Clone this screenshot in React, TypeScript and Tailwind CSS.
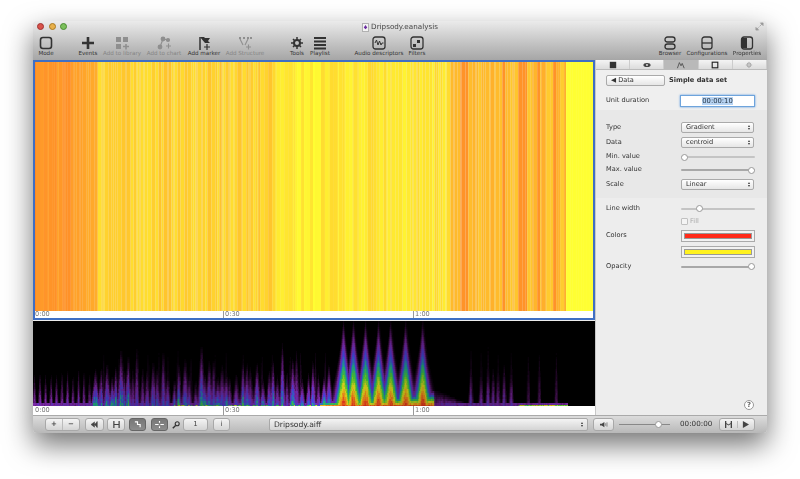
import { FC, ReactNode } from 'react';

// seeded noise so stripes and spectrogram cells stay the same between runs
const makeRng = (seed: number) => () => {
  seed = (seed * 1664525 + 1013904223) % 4294967296;
  return seed / 4294967296;
};

const heatBase = (x: number) => {
  if (x < 16) return 0.86;
  if (x < 49) return 0.82;
  if (x < 61) return 0.62;
  if (x < 239) return 0.36;
  if (x < 286) return 0.12;
  if (x < 414) return 0.2;
  if (x < 532) return 0.52;
  return 0;
};

const buildStripes = () => {
  const rng = makeRng(17);
  const out: { x: number; w: number; fill: string }[] = [];
  let x = 0;
  while (x < 560) {
    const w = 1 + Math.floor(rng() * 4);
    let v = heatBase(x) + (rng() - 0.5) * (x < 532 ? 0.24 : 0);
    const abs = x + 34;
    if ((abs > 460 && abs < 468) || (abs > 500 && abs < 505) || (abs > 516 && abs < 527) || (abs > 534 && abs < 539) || (abs > 551 && abs < 556)) v = 0.85;
    v = Math.max(0, Math.min(1, v));
    out.push({ x, w, fill: `rgb(255,${Math.round(255 - 127 * v)},${Math.round(51 - 13 * v)})` });
    x += w;
  }
  return out;
};

type Spike = { x: number; h: number; w: number; amp: number };

const buildSpikes = () => {
  const rng = makeRng(91);
  const out: Spike[] = [];
  for (let x = 1; x < 62; x += 5.5) out.push({ x, h: 38 + rng() * 6, w: 1, amp: 0.3 });
  for (let x = 62; x < 300; x += 3 + rng() * 4) {
    const tall = rng() > 0.85;
    out.push({ x, h: 30 + rng() * 26 + (tall ? 16 : 0), w: 1.5 + rng() * 2, amp: 0.36 + rng() * 0.28 });
  }
  for (let x = 70; x < 300; x += 9 + rng() * 10) out.push({ x, h: 78, w: 1, amp: 0.14 });
  [309, 319, 331, 344, 356, 371, 388].forEach((x) => out.push({ x, h: 92, w: 8, amp: 1 }));
  [436, 446, 453, 458, 463, 469, 476].forEach((x) => out.push({ x, h: 44 + rng() * 6, w: 1.2, amp: 0.34 }));
  [436, 446, 453, 463, 476].forEach((x) => out.push({ x, h: 82, w: 1, amp: 0.13 }));
  [493, 504, 521].forEach((x) => out.push({ x, h: 70, w: 0.9, amp: 0.18 }));
  return out;
};

const colorStops: [number, number[]][] = [
  [0.02, [0, 0, 0]],
  [0.1, [52, 12, 60]],
  [0.22, [125, 40, 165]],
  [0.36, [70, 70, 225]],
  [0.48, [30, 170, 150]],
  [0.6, [80, 210, 50]],
  [0.74, [240, 230, 30]],
  [0.88, [255, 130, 30]],
  [1, [240, 50, 30]],
];

const colorFor = (i: number) => {
  for (let n = 1; n < colorStops.length; n++) {
    const [hi, hc] = colorStops[n];
    const [lo, lc] = colorStops[n - 1];
    if (i <= hi) {
      const t = Math.max(0, (i - lo) / (hi - lo));
      return `rgb(${lc.map((c, k) => Math.round(c + (hc[k] - c) * t)).join(',')})`;
    }
  }
  return 'rgb(240,50,30)';
};

const buildCells = () => {
  const rng = makeRng(43);
  const spikes = buildSpikes();
  const cells: { x: number; y: number; fill: string }[] = [];
  for (let x = 0; x < 533; x++) {
    const loud = x > 285 && x < 400;
    const colNoise = loud ? 0.95 + rng() * 0.1 : 0.8 + rng() * 0.35;
    for (let y = 0; y < 85; y += 2) {
      const up = 85 - y;
      let i = 0;
      for (const s of spikes) {
        const t = up / s.h;
        if (t >= 1) continue;
        const w = s.w * Math.pow(1 - t, 1.6) + 0.8;
        const dx = (x - s.x) / w;
        if (Math.abs(dx) > 3) continue;
        i = Math.max(i, s.amp * Math.pow(1 - t, 1.25) * Math.exp(-dx * dx));
      }
      // warm ridge under the loud section, tailing off to the right
      if (loud) {
        const ridgeH = 5 + ((x - 285) / 115) * 13;
        i = Math.max(i, 1 - up / ridgeH);
      }
      if (x >= 400 && x < 430) i = Math.max(i, 0.26 * (1 - up / (20 - (x - 400) * 0.5)));
      // thin purple floor across the whole clip
      if (up <= 3) i = Math.max(i, 0.24);
      if (up <= 1 && x > 140 && x < 290 && rng() > 0.6) i = 0.62;
      if (up <= 1 && x > 483) i = 0.72;
      i *= colNoise * (loud ? 0.95 + rng() * 0.1 : 0.82 + rng() * 0.3);
      if (i > 0.03) cells.push({ x, y, fill: colorFor(Math.min(1, i)) });
    }
  }
  return cells;
};

const stripes = buildStripes();
const cells = buildCells();

const Heatmap: FC = () => (
  <svg viewBox="0 0 560 249" preserveAspectRatio="none" className="block h-[249px] w-full">
    {stripes.map((s) => (
      <rect key={s.x} x={s.x} y="0" width={s.w} height="249" fill={s.fill} />
    ))}
  </svg>
);

const Spectrogram: FC = () => (
  <svg viewBox="0 0 560 85" preserveAspectRatio="none" className="block h-[85px] w-full bg-black">
    {cells.map((c) => (
      <rect key={`${c.x}-${c.y}`} x={c.x} y={c.y} width="1" height="2" fill={c.fill} />
    ))}
  </svg>
);

const Axis: FC<{ className: string }> = ({ className }) => (
  <div className={`flex bg-white text-[6.6px] text-[#777] overflow-hidden ${className}`}>
    <span className="w-[188px]">0:00</span>
    <span className="w-[190px] border-l border-[#999] pl-[1px]">0:30</span>
    <span className="border-l border-[#999] pl-[1px]">1:00</span>
  </div>
);

const ToolItem: FC<{ label: string; className: string; off?: boolean; children: ReactNode }> = ({ label, className, off, children }) => (
  <div className={`flex flex-col items-center shrink-0 ${className}`}>
    <svg viewBox="0 0 16 14" className={`h-[14px] w-[16px] ${off ? 'text-[#8f8f8f]' : 'text-[#333]'}`} fill="none" stroke="currentColor" strokeWidth="1.6">
      {children}
    </svg>
    <span className={`whitespace-nowrap text-[5.6px] leading-[7px] ${off ? 'text-[#858585]' : 'text-[#333]'}`}>{label}</span>
  </div>
);

const Toolbar: FC = () => (
  <div className="flex h-[24px] items-start pt-[2px]">
    <ToolItem label="Mode" className="w-[26px]">
      <rect x="2.5" y="1.5" width="11" height="11" rx="2.5" />
    </ToolItem>
    <ToolItem label="Events" className="ml-[17px] w-[24px]">
      <path d="M8 1v12M2 7h12" strokeWidth="2.6" />
    </ToolItem>
    <ToolItem label="Add to library" className="ml-[2px] w-[40px]" off>
      <path d="M2 1h5v5H2zM9 1h5v5H9zM2 8h5v5H2z" fill="currentColor" stroke="none" />
      <path d="M9 10.5h6M12 8v5.5" />
    </ToolItem>
    <ToolItem label="Add to chart" className="ml-[4px] w-[36px]" off>
      <circle cx="4" cy="11" r="1.6" fill="currentColor" />
      <circle cx="7" cy="3" r="1.6" fill="currentColor" />
      <circle cx="12" cy="4" r="1.3" fill="currentColor" />
      <path d="M4 11L7 3l5 1M10 10h5M12.5 7.5v5" strokeWidth="1.1" />
    </ToolItem>
    <ToolItem label="Add marker" className="ml-[4px] w-[36px]">
      <path d="M4 14V1" strokeWidth="1.5" />
      <path d="M4 1h4l1 1h5l-2 3 2 2H9" fill="currentColor" stroke="none" />
      <path d="M8 11h6M11 8v6" strokeWidth="1.2" />
    </ToolItem>
    <ToolItem label="Add Structure" className="ml-[2px] w-[42px]" off>
      <path d="M2 1h2v2H2zM6 1h2v2H6zM10 1h2v2h-2zM13 1h2v2h-2z" fill="currentColor" stroke="none" />
      <path d="M3 3l3 6M11 3L8 9M9 11h5M11.5 8.5v5" strokeWidth="1.1" />
    </ToolItem>
    <ToolItem label="Tools" className="ml-[21px] w-[20px]">
      <circle cx="8" cy="7" r="3" fill="none" strokeWidth="2" />
      <path d="M8 1v3M8 10v3M2 7h3M11 7h3M4 3l2 2M10 9l2 2M12 3l-2 2M6 9l-2 2" strokeWidth="1.5" />
    </ToolItem>
    <ToolItem label="Playlist" className="ml-[2px] w-[22px]">
      <path d="M2 2h12M2 5.5h12M2 9h12M2 12.5h12" strokeWidth="2" />
    </ToolItem>
    <ToolItem label="Audio descriptors" className="ml-[22px] w-[52px]">
      <rect x="2" y="1" width="12" height="12" rx="2.5" strokeWidth="1.3" />
      <path d="M4 7l1.5-3L7 9l1.5-4L10 9l1-2h1.5" strokeWidth="1" />
    </ToolItem>
    <ToolItem label="Filters" className="ml-[2px] w-[20px]">
      <rect x="2" y="1" width="12" height="12" rx="2.5" strokeWidth="1.3" />
      <path d="M8 4h3v3H8zM4 8h3v3H4z" fill="currentColor" stroke="none" />
    </ToolItem>
    <div className="flex-1" />
    <ToolItem label="Browser" className="w-[24px]">
      <rect x="3" y="1" width="10" height="5" rx="2.5" strokeWidth="1.3" />
      <rect x="3" y="8" width="10" height="5" rx="2.5" strokeWidth="1.3" />
    </ToolItem>
    <ToolItem label="Configurations" className="ml-[3px] w-[44px]">
      <rect x="3" y="1" width="10" height="12" rx="2.5" strokeWidth="1.3" />
      <path d="M3 7h10" strokeWidth="1.3" />
    </ToolItem>
    <ToolItem label="Properties" className="ml-[4px] mr-[6px] w-[28px]">
      <rect x="2.5" y="1" width="11" height="12" rx="2.5" strokeWidth="1.3" />
      <path d="M3 2h5v10H3z" fill="currentColor" stroke="none" />
    </ToolItem>
  </div>
);

const tabs: { key: string; icon: ReactNode }[] = [
  { key: 'a', icon: <rect x="2" y="1" width="8" height="8" fill="#333" /> },
  { key: 'b', icon: <><ellipse cx="6" cy="5" rx="4.5" ry="2.5" fill="#444" /><circle cx="6" cy="5" r="1.2" fill="#ddd" /></> },
  { key: 'c', icon: <path d="M1.5 9L4 2l2 4 1.5-3L10 9" fill="none" stroke="#444" strokeWidth="1" /> },
  { key: 'd', icon: <rect x="2.5" y="1.5" width="7" height="7" fill="none" stroke="#222" strokeWidth="1.4" /> },
  { key: 'e', icon: <><circle cx="6" cy="5" r="2.4" fill="none" stroke="#aaa" strokeWidth="1.3" /><path d="M6 1v8M2 5h8" stroke="#aaa" strokeWidth="0.8" /></> },
];

const Row: FC<{ label: string; className?: string; children?: ReactNode }> = ({ label, className = '', children }) => (
  <div className={`flex items-center pl-[10px] ${className}`}>
    <span className="w-[75px] shrink-0 text-[6.6px] text-[#333]">{label}</span>
    {children}
  </div>
);

const Select: FC<{ value: string }> = ({ value }) => (
  <div className="flex h-[11px] w-[73px] items-center justify-between rounded-[2px] border border-[#aaa] bg-gradient-to-b from-white to-[#e6e6e6] pl-[4px] pr-[3px] text-[6.6px] text-[#333]">
    <span>{value}</span>
    <span className="flex flex-col gap-[1px]">
      <span className="block h-0 w-0 border-x-[1.5px] border-b-[2px] border-x-transparent border-b-[#333]" />
      <span className="block h-0 w-0 border-x-[1.5px] border-t-[2px] border-x-transparent border-t-[#333]" />
    </span>
  </div>
);

const Slider: FC<{ percent: number; dark?: boolean }> = ({ percent, dark }) => (
  <div className="relative h-[7px] w-[74px]">
    <div className={`absolute left-0 right-0 top-[2.5px] h-[2px] rounded-full ${dark ? 'bg-[#a8a8a8]' : 'bg-[#c4c4c4]'}`} />
    <div className="absolute top-0 h-[7px] w-[7px] rounded-full border border-[#999] bg-white" style={{ left: `calc(${percent}% - ${(percent / 100) * 7}px)` }} />
  </div>
);

const Swatch: FC<{ color: string }> = ({ color }) => (
  <div className="h-[12px] w-[74px] border border-[#aaa] bg-[#f2f2f2] p-[2px]">
    <div className={`h-full w-full border border-[#999] ${color}`} />
  </div>
);

const Panel: FC = () => (
  <div className="flex w-[172px] shrink-0 flex-col border-l border-[#c8c8c8] bg-[#ededed]">
    <div className="flex h-[10px] border-b border-[#bbb] bg-gradient-to-b from-[#f4f4f4] to-[#dcdcdc]">
      {tabs.map((t, i) => (
        <div key={t.key} className={`flex flex-1 items-center justify-center border-r border-[#ccc] ${i === 2 ? 'bg-[#b9b9b9]' : ''}`}>
          <svg viewBox="0 0 12 10" className="h-[8px] w-[10px]">{t.icon}</svg>
        </div>
      ))}
    </div>
    <div className="h-[40px] bg-[#efefef]">
      <div className="flex items-center pl-[10px] pt-[5px]">
        <div className="flex h-[11px] w-[59px] items-center rounded-[2px] border border-[#aaa] bg-gradient-to-b from-white to-[#e6e6e6] pl-[4px] text-[6.6px] text-[#333]">◀ Data</div>
        <span className="ml-[4px] text-[6.6px] font-bold text-[#333]">Simple data set</span>
      </div>
      <Row label="Unit duration" className="mt-[9px]">
        <div className="-ml-[1px] h-[12px] w-[75px] border border-[#6ea4dc] bg-white text-center text-[6.8px] leading-[10px] text-[#234] shadow-[0_0_2px_#5b9ae0]">
          <span className="bg-[#b7d3f2]">00:00:10</span>
        </div>
      </Row>
    </div>
    <div className="h-[88px] bg-[#e8e8e8] pt-[12px]">
      <Row label="Type"><Select value="Gradient" /></Row>
      <Row label="Data" className="mt-[4px]"><Select value="centroid" /></Row>
      <Row label="Min. value" className="mt-[4px] h-[10px]"><Slider percent={0} /></Row>
      <Row label="Max. value" className="mt-[3px] h-[10px]"><Slider percent={100} dark /></Row>
      <Row label="Scale" className="mt-[4px]"><Select value="Linear" /></Row>
    </div>
    <div className="relative flex-1 pt-[6px]">
      <Row label="Line width" className="h-[9px]"><Slider percent={23} /></Row>
      <Row label="" className="mt-[4px] h-[9px]">
        <span className="h-[7px] w-[7px] rounded-[1px] border border-[#c0c0c0] bg-[#f4f4f4]" />
        <span className="ml-[2px] text-[6.6px] text-[#aaa]">Fill</span>
      </Row>
      <Row label="Colors" className="mt-[4px]"><Swatch color="bg-[#ff2a1a]" /></Row>
      <Row label="" className="mt-[4px]"><Swatch color="bg-[#fff21f]" /></Row>
      <Row label="Opacity" className="mt-[4px] h-[9px]"><Slider percent={100} dark /></Row>
      <div className="absolute bottom-[5px] right-[13px] flex h-[10px] w-[10px] items-center justify-center rounded-full border border-[#999] bg-white text-[7px] font-bold text-[#666]">?</div>
    </div>
  </div>
);

const Btn: FC<{ className: string; dark?: boolean; children?: ReactNode }> = ({ className, dark, children }) => (
  <div className={`flex h-[13px] items-center justify-center rounded-[3px] border text-[7px] ${dark ? 'border-[#666] bg-gradient-to-b from-[#777] to-[#8c8c8c] text-white' : 'border-[#a8a8a8] bg-gradient-to-b from-[#f4f4f4] to-[#d4d4d4] text-[#444]'} ${className}`}>
    {children}
  </div>
);

const BottomBar: FC = () => (
  <div className="flex h-[18px] items-center rounded-b-[4px] border-t border-[#aaa] bg-gradient-to-b from-[#dcdcdc] to-[#b8b8b8] pl-[12px]">
    <Btn className="w-[35px] font-bold"><span className="flex-1 border-r border-[#bbb] text-center">+</span><span className="flex-1 text-center">−</span></Btn>
    <Btn className="ml-[5px] w-[19px]">
      <svg viewBox="0 0 10 8" className="h-[7px] w-[9px]"><path d="M8 0v8M1 4l4-3v6z M5 4l3-3v6z" fill="#444" stroke="#444" strokeWidth="0.6" /></svg>
    </Btn>
    <Btn className="ml-[3px] w-[18px]">
      <svg viewBox="0 0 10 8" className="h-[7px] w-[9px]"><path d="M2 0v8M8 0v8M2 4h6" stroke="#444" strokeWidth="1.4" fill="none" /></svg>
    </Btn>
    <Btn className="ml-[4px] w-[17px]" dark>
      <svg viewBox="0 0 10 8" className="h-[7px] w-[9px]"><path d="M2 1h3v3h3v3" stroke="#fff" strokeWidth="1.3" fill="none" /></svg>
    </Btn>
    <Btn className="ml-[5px] w-[17px]" dark>
      <svg viewBox="0 0 10 8" className="h-[7px] w-[9px]"><path d="M0 4h4M6 4h4M5 0v2M5 6v2" stroke="#fff" strokeWidth="1.3" fill="none" /></svg>
    </Btn>
    <svg viewBox="0 0 10 10" className="ml-[4px] h-[8px] w-[8px]"><circle cx="6.5" cy="3.5" r="2.5" fill="none" stroke="#333" strokeWidth="1.4" /><path d="M4.5 5.5L1 9" stroke="#333" strokeWidth="1.8" /></svg>
    <Btn className="ml-[3px] w-[25px]">1</Btn>
    <Btn className="ml-[5px] w-[17px]">i</Btn>
    <Btn className="ml-[39px] w-[319px] !justify-between !rounded-[2px] px-[4px]">
      <span className="text-[7.6px] text-[#333]">Dripsody.aiff</span>
      <span className="flex flex-col gap-[1px]">
        <span className="block h-0 w-0 border-x-[1.5px] border-b-[2px] border-x-transparent border-b-[#333]" />
        <span className="block h-0 w-0 border-x-[1.5px] border-t-[2px] border-x-transparent border-t-[#333]" />
      </span>
    </Btn>
    <Btn className="ml-[5px] w-[21px]">
      <svg viewBox="0 0 10 8" className="h-[7px] w-[9px]"><path d="M1 3h2l3-2v6L3 5H1z" fill="#444" /><path d="M7.5 2.5v3M9 1.5v5" stroke="#555" strokeWidth="0.7" /></svg>
    </Btn>
    <div className="relative ml-[5px] h-[7px] w-[51px]">
      <div className="absolute left-0 right-0 top-[3px] h-px bg-[#888]" />
      <div className="absolute left-[36px] top-0 h-[7px] w-[7px] rounded-full border border-[#999] bg-white" />
    </div>
    <span className="ml-[10px] w-[33px] text-[7.2px] text-[#333]">00:00:00</span>
    <Btn className="ml-[6px] w-[36px]">
      <span className="flex flex-1 justify-center border-r border-[#bbb]">
        <svg viewBox="0 0 10 8" className="h-[7px] w-[9px]"><path d="M1 0h1.5v8H1zM7.5 0H9v8H7.5zM2 2l3 2 3-2v1L5 5 2 3z" fill="#444" /></svg>
      </span>
      <span className="flex flex-1 justify-center">
        <svg viewBox="0 0 10 8" className="h-[7px] w-[9px]"><path d="M2 0v8l7-4z" fill="#444" /></svg>
      </span>
    </Btn>
  </div>
);

export default function App() {
  return (
    <div className="h-[479px] w-[800px] overflow-hidden bg-white pl-[33px] pt-[21px] font-['DejaVu_Sans',sans-serif]">
      <div className="flex h-[412px] w-[734px] flex-col rounded-[4px] bg-[#ededed] shadow-[0_12px_28px_rgba(0,0,0,0.55)] blur-[0.35px]">
        <div className="h-[39px] shrink-0 rounded-t-[4px] bg-gradient-to-b from-[#ebebeb] to-[#a6a6a6]">
          <div className="relative flex h-[13px] items-center justify-center">
            <div className="absolute left-[4px] top-[2px] flex gap-[4.5px]">
              <span className="h-[7px] w-[7px] rounded-full border border-[#a03030] bg-[#d9534a]" />
              <span className="h-[7px] w-[7px] rounded-full border border-[#a87820] bg-[#e8b04a]" />
              <span className="h-[7px] w-[7px] rounded-full border border-[#4a8a30] bg-[#7cc05c]" />
            </div>
            <svg viewBox="0 0 8 10" className="mr-[2px] h-[9px] w-[7px]"><rect x="0.5" y="0.5" width="7" height="9" fill="#f4f4f4" stroke="#aaa" /><path d="M4 2l2 3-2 2-2-2z" fill="#6a2aa0" /></svg>
            <span className="text-[7.2px] text-[#444]">Dripsody.eanalysis</span>
            <svg viewBox="0 0 10 10" className="absolute right-[3px] top-[1px] h-[9px] w-[9px]"><path d="M6 1h3v3zM1 6v3h3zM8 2L5 5M2 8l2-2" fill="#999" stroke="#999" strokeWidth="0.8" /></svg>
          </div>
          <Toolbar />
        </div>
        <div className="flex min-h-0 flex-1">
          <div className="flex w-[562px] shrink-0 flex-col">
            <div className="border-2 border-[#3f6fc4]">
              <Heatmap />
              <Axis className="h-[7px] leading-[7px]" />
            </div>
            <div className="mt-[1px]">
              <Spectrogram />
              <div className="bg-white pl-[2px]"><Axis className="h-[9px] leading-[8px]" /></div>
            </div>
          </div>
          <Panel />
        </div>
        <BottomBar />
      </div>
    </div>
  );
}
